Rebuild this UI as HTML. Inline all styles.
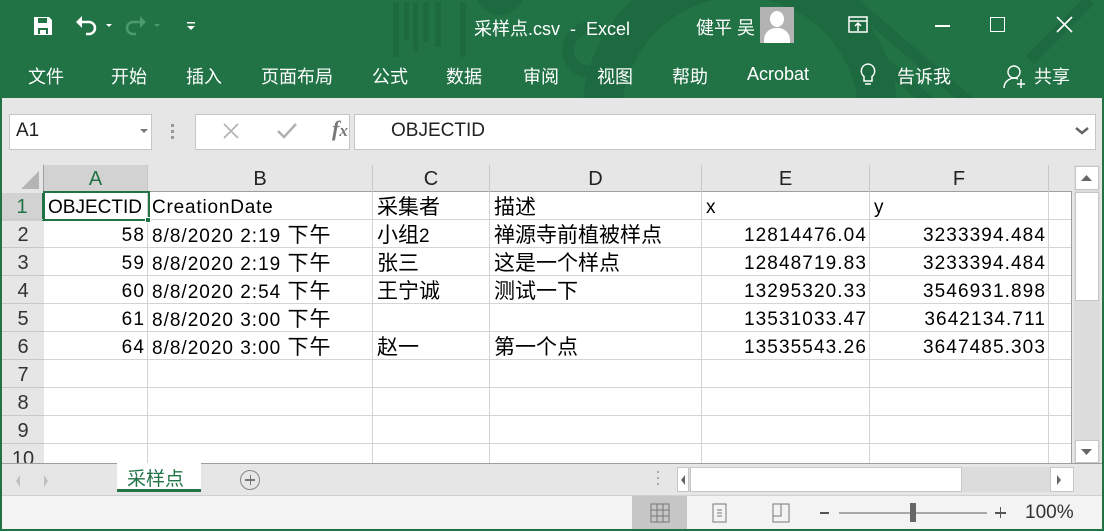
<!DOCTYPE html>
<html><head><meta charset="utf-8"><style>
*{margin:0;padding:0;box-sizing:border-box}
body{width:1104px;height:531px;overflow:hidden;background:#217346;font-family:"Liberation Sans","Noto Sans CJK SC",sans-serif;position:relative}
.a{position:absolute}
.w{color:#fff}
.t{font-size:18px;top:63px;color:#fff;white-space:nowrap}
.cell{position:absolute;font-size:19px;color:#000;white-space:nowrap;line-height:28px}
.cell b{font-weight:normal;font-size:21px}
.n{letter-spacing:1.1px}
.d{letter-spacing:1px}
.r{text-align:right}
.rh{position:absolute;left:2px;width:42px;text-align:center;font-size:20px;color:#333;line-height:28px;background:#e6e6e6}
.ch{position:absolute;top:165px;height:27px;text-align:center;font-size:20px;color:#222;line-height:29px;border-right:1px solid #c8c8c8}
</style></head><body>
<svg class="a" style="left:390px;top:0" width="714" height="98">
<g fill="#1e6a40" opacity="0.9">
<rect x="3" y="2" width="6" height="55"/><rect x="14" y="2" width="5" height="38"/><rect x="23" y="2" width="5" height="50"/><rect x="33" y="2" width="6" height="40"/><rect x="45" y="2" width="6" height="45"/><rect x="70" y="2" width="6" height="55"/>
</g>
<circle cx="350" cy="115" r="138" fill="none" stroke="#1e6a40" stroke-width="40"/>
<circle cx="200" cy="50" r="22" fill="none" stroke="#1e6a40" stroke-width="12"/>
<circle cx="110" cy="-10" r="25" fill="#1e6a40"/>
<g stroke="#1e6a40" stroke-width="12"><line x1="420" y1="0" x2="560" y2="120"/><line x1="460" y1="0" x2="600" y2="120"/><line x1="640" y1="60" x2="700" y2="0"/></g>
</svg>
<svg class="a" style="left:33px;top:16px" width="20" height="20"><path d="M1 1h15l3 3v15H1z" fill="#fff"/><rect x="5" y="2" width="9" height="5" fill="#217346"/><rect x="5" y="12" width="10" height="6" fill="#217346"/><rect x="7" y="14" width="6" height="4" fill="#fff"/></svg>
<svg class="a" style="left:74px;top:14px" width="40" height="24"><path d="M6 8h9a6 6 0 0 1 0 12h-3" stroke="#fff" stroke-width="2.5" fill="none"/><path d="M2 8l6-6v12z" fill="#fff"/><path d="M32 10l3 3 3-3z" fill="#fff"/></svg>
<svg class="a" style="left:122px;top:14px" width="44" height="24"><path d="M20 8h-9a6 6 0 0 0 0 12h3" stroke="#4a9a6c" stroke-width="2.5" fill="none"/><path d="M24 8l-6-6v12z" fill="#4a9a6c"/><path d="M32 10l3 3 3-3z" fill="#4a9a6c"/></svg>
<svg class="a" style="left:186px;top:20px" width="12" height="12"><rect x="1" y="2" width="8" height="1.5" fill="#fff"/><path d="M1 6h8l-4 4z" fill="#fff"/></svg>
<div class="a w" style="left:474px;top:15px;font-size:18px">采样点.csv &nbsp;- &nbsp;Excel</div>
<div class="a w" style="left:696px;top:14px;font-size:18px">健平 吴</div>
<div class="a" style="left:760px;top:7px;width:34px;height:36px;background:#b3b3b3;overflow:hidden"><div class="a" style="left:10px;top:4px;width:14px;height:16px;border-radius:50%;background:#fff"></div><div class="a" style="left:4px;top:21px;width:26px;height:20px;border-radius:12px 12px 0 0;background:#fff"></div></div>
<svg class="a" style="left:848px;top:16px" width="22" height="20"><rect x="1" y="1" width="18" height="15" fill="none" stroke="#fff" stroke-width="1.5"/><line x1="1" y1="5" x2="19" y2="5" stroke="#fff" stroke-width="1.5"/><path d="M10 15V8M7 10l3-3 3 3" stroke="#fff" stroke-width="1.5" fill="none"/></svg>
<div class="a" style="left:935px;top:25px;width:15px;height:1.5px;background:#fff"></div>
<div class="a" style="left:990px;top:17px;width:15px;height:15px;border:1.5px solid #fff"></div>
<svg class="a" style="left:1056px;top:16px" width="18" height="18"><path d="M1 1l15 15M16 1L1 16" stroke="#fff" stroke-width="1.6"/></svg>
<div class="a t" style="left:28px">文件</div>
<div class="a t" style="left:111px">开始</div>
<div class="a t" style="left:186px">插入</div>
<div class="a t" style="left:261px">页面布局</div>
<div class="a t" style="left:372px">公式</div>
<div class="a t" style="left:446px">数据</div>
<div class="a t" style="left:523px">审阅</div>
<div class="a t" style="left:597px">视图</div>
<div class="a t" style="left:672px">帮助</div>
<div class="a t" style="left:747px;top:64px">Acrobat</div>
<svg class="a" style="left:858px;top:62px" width="20" height="26"><path d="M10 2a7 7 0 0 0-4 12.5V19h8v-4.5A7 7 0 0 0 10 2z" fill="none" stroke="#fff" stroke-width="1.5"/><line x1="7" y1="22" x2="13" y2="22" stroke="#fff" stroke-width="1.5"/></svg>
<div class="a t" style="left:897px">告诉我</div>
<svg class="a" style="left:1002px;top:64px" width="26" height="26"><circle cx="12" cy="8" r="6" fill="none" stroke="#fff" stroke-width="1.4"/><path d="M2 24a10 10 0 0 1 14-9" fill="none" stroke="#fff" stroke-width="1.4"/><path d="M19 15v9M15 20h8" stroke="#fff" stroke-width="1.4"/></svg>
<div class="a t" style="left:1034px">共享</div>
<div class="a" style="left:2px;top:98px;width:1100px;height:431px;background:#e6e6e6"></div>
<div class="a" style="left:9px;top:114px;width:143px;height:36px;background:#fff;border:1px solid #c6c6c6"></div>
<div class="a" style="left:16px;top:120px;font-size:19px;color:#222">A1</div>
<svg class="a" style="left:140px;top:129px" width="8" height="5"><path d="M0 0h8l-4 4z" fill="#777"/></svg>
<div class="a" style="left:171px;top:124px;width:3px;height:3px;background:#999;box-shadow:0 6px #999,0 12px #999"></div>
<div class="a" style="left:195px;top:114px;width:155px;height:36px;background:#fff;border:1px solid #c6c6c6"></div>
<svg class="a" style="left:222px;top:122px" width="20" height="18"><path d="M2 2l14 14M16 2L2 16" stroke="#b0b0b0" stroke-width="1.6"/></svg>
<svg class="a" style="left:276px;top:122px" width="24" height="18"><path d="M2 9l6 6L20 2" stroke="#b0b0b0" stroke-width="2.5" fill="none"/></svg>
<div class="a" style="left:332px;top:116px;font-size:22px;font-weight:bold;font-style:italic;font-family:'Liberation Serif',serif;color:#777">f<span style="font-size:17px">x</span></div>
<div class="a" style="left:354px;top:114px;width:742px;height:36px;background:#fff;border:1px solid #c6c6c6"></div>
<div class="a" style="left:391px;top:120px;font-size:19px;color:#222">OBJECTID</div>
<svg class="a" style="left:1075px;top:127px" width="14" height="10"><path d="M1 1l6 5 6-5" stroke="#666" stroke-width="2.5" fill="none"/></svg>
<div class="a" style="left:44px;top:192px;width:1028px;height:271px;background:#fff;background-image:linear-gradient(#d4d4d4 1px,transparent 1px);background-size:100% 28px;background-position:0 27px"></div>
<div class="a" style="left:147px;top:192px;width:1px;height:271px;background:#d4d4d4"></div>
<div class="a" style="left:372px;top:192px;width:1px;height:271px;background:#d4d4d4"></div>
<div class="a" style="left:489px;top:192px;width:1px;height:271px;background:#d4d4d4"></div>
<div class="a" style="left:701px;top:192px;width:1px;height:271px;background:#d4d4d4"></div>
<div class="a" style="left:869px;top:192px;width:1px;height:271px;background:#d4d4d4"></div>
<div class="a" style="left:1048px;top:192px;width:1px;height:271px;background:#d4d4d4"></div>
<div class="a" style="left:44px;top:191px;width:1028px;height:1px;background:#9e9e9e"></div>
<div class="a" style="left:43px;top:165px;width:1px;height:298px;background:#9e9e9e"></div>
<div class="a" style="left:1071px;top:192px;width:1px;height:271px;background:#9e9e9e"></div>
<svg class="a" style="left:20px;top:170px" width="20" height="20"><path d="M19 1v18H1z" fill="#b4b4b4"/></svg>
<div class="ch" style="left:44px;width:104px;background:#d2d2d2;color:#217346;border-bottom:2px solid #217346;height:28px">A</div>
<div class="ch" style="left:148px;width:225px">B</div>
<div class="ch" style="left:373px;width:117px">C</div>
<div class="ch" style="left:490px;width:212px">D</div>
<div class="ch" style="left:702px;width:168px">E</div>
<div class="ch" style="left:870px;width:179px">F</div>
<div class="ch" style="left:1049px;width:23px;border:none"></div>
<div class="rh" style="top:193px;background:#d2d2d2;color:#217346;border-right:2px solid #217346">1</div>
<div class="rh" style="top:221px">2</div><div class="rh" style="top:249px">3</div><div class="rh" style="top:277px">4</div><div class="rh" style="top:305px">5</div><div class="rh" style="top:333px">6</div><div class="rh" style="top:361px">7</div><div class="rh" style="top:389px">8</div><div class="rh" style="top:417px">9</div><div class="rh" style="top:445px;height:18px;overflow:hidden">10</div>
<div class="a" style="left:2px;top:219px;width:42px;height:244px;background-image:linear-gradient(#c8c8c8 1px,transparent 1px);background-size:100% 28px"></div>
<div class="a" style="left:43px;top:191px;width:107px;height:30px;border:2px solid #217346"></div>
<div class="a" style="left:145px;top:217px;width:6px;height:6px;background:#217346;border:1px solid #fff"></div>
<div class="cell" style="left:48px;top:194px">OBJECTID</div>
<div class="cell" style="left:152px;top:194px;letter-spacing:0.8px">CreationDate</div>
<div class="cell" style="left:377px;top:194px"><b>采集者</b></div>
<div class="cell" style="left:494px;top:194px"><b>描述</b></div>
<div class="cell" style="left:706px;top:194px">x</div>
<div class="cell" style="left:874px;top:194px">y</div>
<div class="cell r n" style="left:44px;width:101px;top:222px">58</div>
<div class="cell r n" style="left:44px;width:101px;top:250px">59</div>
<div class="cell r n" style="left:44px;width:101px;top:278px">60</div>
<div class="cell r n" style="left:44px;width:101px;top:306px">61</div>
<div class="cell r n" style="left:44px;width:101px;top:334px">64</div>
<div class="cell d" style="left:152px;top:222px">8/8/2020 2:19 <b>下午</b></div>
<div class="cell d" style="left:152px;top:250px">8/8/2020 2:19 <b>下午</b></div>
<div class="cell d" style="left:152px;top:278px">8/8/2020 2:54 <b>下午</b></div>
<div class="cell d" style="left:152px;top:306px">8/8/2020 3:00 <b>下午</b></div>
<div class="cell d" style="left:152px;top:334px">8/8/2020 3:00 <b>下午</b></div>
<div class="cell" style="left:377px;top:222px"><b>小组</b>2</div>
<div class="cell" style="left:377px;top:250px"><b>张三</b></div>
<div class="cell" style="left:377px;top:278px"><b>王宁诚</b></div>
<div class="cell" style="left:377px;top:334px"><b>赵一</b></div>
<div class="cell" style="left:494px;top:222px"><b>禅源寺前植被样点</b></div>
<div class="cell" style="left:494px;top:250px"><b>这是一个样点</b></div>
<div class="cell" style="left:494px;top:278px"><b>测试一下</b></div>
<div class="cell" style="left:494px;top:334px"><b>第一个点</b></div>
<div class="cell r n" style="left:702px;width:165px;top:222px">12814476.04</div>
<div class="cell r n" style="left:702px;width:165px;top:250px">12848719.83</div>
<div class="cell r n" style="left:702px;width:165px;top:278px">13295320.33</div>
<div class="cell r n" style="left:702px;width:165px;top:306px">13531033.47</div>
<div class="cell r n" style="left:702px;width:165px;top:334px">13535543.26</div>
<div class="cell r n" style="left:870px;width:176px;top:222px">3233394.484</div>
<div class="cell r n" style="left:870px;width:176px;top:250px">3233394.484</div>
<div class="cell r n" style="left:870px;width:176px;top:278px">3546931.898</div>
<div class="cell r n" style="left:870px;width:176px;top:306px">3642134.711</div>
<div class="cell r n" style="left:870px;width:176px;top:334px">3647485.303</div>
<div class="a" style="left:1074px;top:165px;width:26px;height:298px;background:#dcdcdc"></div>
<div class="a" style="left:1075px;top:166px;width:24px;height:24px;background:#fff;border:1px solid #c6c6c6"></div>
<svg class="a" style="left:1081px;top:174px" width="12" height="8"><path d="M0 7h11L5.5 1z" fill="#666"/></svg>
<div class="a" style="left:1075px;top:192px;width:24px;height:109px;background:#fff;border:1px solid #c6c6c6"></div>
<div class="a" style="left:1075px;top:440px;width:24px;height:23px;background:#fff;border:1px solid #c6c6c6"></div>
<svg class="a" style="left:1081px;top:448px" width="12" height="8"><path d="M0 1h11L5.5 7z" fill="#666"/></svg>
<div class="a" style="left:2px;top:463px;width:1100px;height:1px;background:#9e9e9e"></div>
<svg class="a" style="left:14px;top:474px" width="60" height="14"><path d="M6 1L2 7l4 6z" fill="#c0c0c0"/><path d="M30 1l4 6-4 6z" fill="#c0c0c0"/></svg>
<div class="a" style="left:117px;top:463px;width:84px;height:29px;background:#fff;border-bottom:3px solid #217346"></div>
<div class="a" style="left:127px;top:464px;font-size:19px;color:#217346">采样点</div>
<div class="a" style="left:240px;top:470px;width:20px;height:20px;border:1.3px solid #888;border-radius:50%"></div>
<div class="a" style="left:245px;top:479px;width:10px;height:1.5px;background:#777"></div>
<div class="a" style="left:249.5px;top:475px;width:1.5px;height:10px;background:#777"></div>
<div class="a" style="left:657px;top:471px;width:2px;height:2px;background:#aaa;box-shadow:0 6px #aaa,0 12px #aaa"></div>
<div class="a" style="left:677px;top:467px;width:397px;height:25px;background:#dcdcdc"></div>
<div class="a" style="left:677px;top:467px;width:12px;height:25px;background:#fff;border:1px solid #c6c6c6"></div>
<svg class="a" style="left:679px;top:474px" width="8" height="12"><path d="M6 1L2 6l4 5z" fill="#666"/></svg>
<div class="a" style="left:690px;top:467px;width:272px;height:25px;background:#fff;border:1px solid #c6c6c6"></div>
<div class="a" style="left:1050px;top:467px;width:24px;height:25px;background:#fff;border:1px solid #c6c6c6"></div>
<svg class="a" style="left:1055px;top:474px" width="8" height="12"><path d="M2 1l4 5-4 5z" fill="#666"/></svg>
<div class="a" style="left:2px;top:495px;width:1100px;height:34px;background:#f3f3f3;border-top:1px solid #d0d0d0"></div>
<div class="a" style="left:632px;top:496px;width:55px;height:33px;background:#c6c6c6"></div>
<svg class="a" style="left:650px;top:503px" width="20" height="20"><path d="M1 1h18v18H1zM1 7h18M1 13h18M7 1v18M13 1v18" fill="none" stroke="#777"/></svg>
<svg class="a" style="left:710px;top:503px" width="20" height="20"><rect x="3" y="1" width="13" height="18" fill="none" stroke="#777"/><path d="M7 7h5M7 10h5M7 13h5" stroke="#777"/></svg>
<svg class="a" style="left:771px;top:503px" width="20" height="20"><path d="M2 1h16v18H2zM2 13h8V1" fill="none" stroke="#777"/></svg>
<div class="a" style="left:820px;top:512px;width:9px;height:1.5px;background:#555"></div>
<div class="a" style="left:839px;top:512px;width:148px;height:2px;background:#a8a8a8"></div>
<div class="a" style="left:910px;top:503px;width:6px;height:19px;background:#666"></div>
<div class="a" style="left:995px;top:512px;width:11px;height:1.5px;background:#555"></div>
<div class="a" style="left:999.7px;top:507px;width:1.5px;height:11px;background:#555"></div>
<div class="a" style="left:1025px;top:502px;font-size:19px;color:#333">100%</div>
</body></html>
